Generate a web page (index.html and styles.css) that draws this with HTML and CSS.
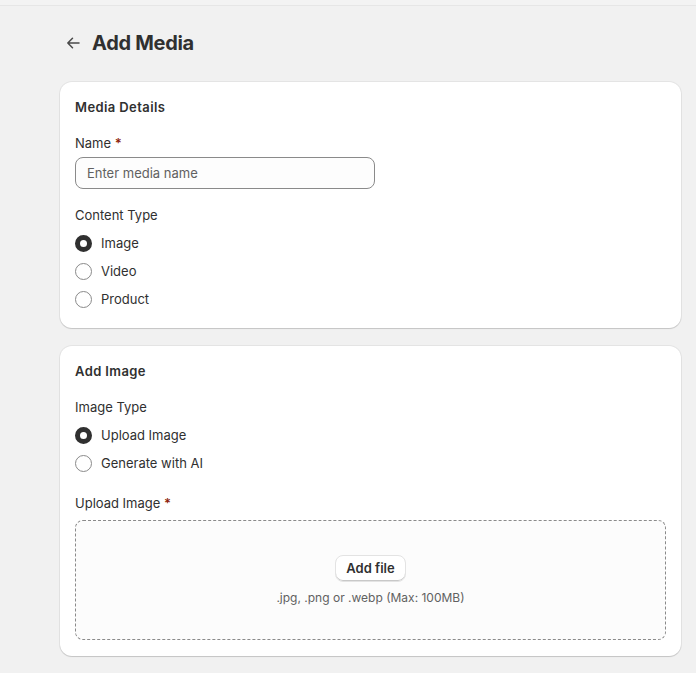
FILE: index.html
```html
<!DOCTYPE html>
<html>
<head>
<meta charset="utf-8">
<link rel="stylesheet" href="styles.css">
</head>
<body>
<div class="topbar"></div>
<main class="page">
  <header class="page-header">
    <span class="back">
      <svg width="20" height="20" viewBox="0 0 20 20"><path d="M16 10H4.8M9.5 5.3 4.8 10l4.7 4.7" fill="none" stroke="#4a4a4a" stroke-width="1.5" stroke-linecap="round" stroke-linejoin="round"/></svg>
    </span>
    <h1 class="title">Add Media</h1>
  </header>

  <section class="card first-card">
    <h2 class="card-title">Media Details</h2>
    <label class="label first">Name <span class="req">*</span></label>
    <div class="input">Enter media name</div>
    <div class="label section">Content Type</div>
    <div class="radios">
      <div class="radio-row"><span class="radio checked"></span>Image</div>
      <div class="radio-row"><span class="radio"></span>Video</div>
      <div class="radio-row"><span class="radio"></span>Product</div>
    </div>
  </section>

  <section class="card">
    <h2 class="card-title">Add Image</h2>
    <div class="label section">Image Type</div>
    <div class="radios">
      <div class="radio-row"><span class="radio checked"></span>Upload Image</div>
      <div class="radio-row"><span class="radio"></span>Generate with AI</div>
    </div>
    <div class="label section">Upload Image <span class="req">*</span></div>
    <div class="dropzone">
      <button class="btn">Add file</button>
      <div class="hint">.jpg, .png or .webp (Max: 100MB)</div>
    </div>
  </section>
</main>
</body>
</html>
```
FILE: styles.css
```css
* { box-sizing: border-box; }
html, body { margin: 0; padding: 0; }
body {
  background: #f1f1f1;
  font-family: Inter, "Noto Sans", sans-serif;
  font-size: 13px;
  line-height: 20px;
  color: #303030;
  width: 696px;
  height: 673px;
  overflow: hidden;
}
.topbar {
  height: 6px;
  border-bottom: 1px solid #e6e6e6;
  background: #f3f3f3;
}
.page {
  margin-left: 60px;
  width: 621px;
  padding-top: 25px;
  display: flex;
  flex-direction: column;
  gap: 18px;
}
.page-header {
  display: flex;
  align-items: center;
  height: 24px;
  margin-bottom: 9px;
}
.back {
  display: flex;
  width: 20px;
  height: 20px;
  margin-left: 3px;
  margin-right: 9px;
}
.title {
  margin: 0;
  font-size: 20px;
  line-height: 24px;
  font-weight: 700;
  letter-spacing: -0.3px;
  color: #303030;
}
.card {
  background: #fff;
  border-radius: 12px;
  padding: 15px 15px 16px;
  box-shadow: 0 0 0 1px rgba(0,0,0,0.05), 0 1px 1px rgba(0,0,0,0.14);
  display: flex;
  flex-direction: column;
}
.card.first-card { padding-bottom: 15px; }
.card-title {
  margin: 0;
  font-size: 13px;
  line-height: 20px;
  font-weight: 600;
  letter-spacing: 0.4px;
}
.label { display: block; }
.label.first { margin-top: 16px; }
.label.section { margin-top: 16px; }
.req { color: #8e1f0b; font-weight: 600; }
.input {
  margin-top: 4px;
  width: 300px;
  height: 32px;
  border: 1px solid #8a8a8a;
  border-radius: 8px;
  padding: 0 11px;
  display: flex;
  align-items: center;
  color: #616161;
  background: #fdfdfd;
}
.radios {
  margin-top: 4px;
  display: flex;
  flex-direction: column;
}
.radio-row {
  height: 28px;
  display: flex;
  align-items: center;
  gap: 9px;
}
.radio {
  width: 17px;
  height: 17px;
  border-radius: 50%;
  border: 1px solid #8a8a8a;
  background: #fff;
  flex: none;
}
.radio.checked {
  border: 5.5px solid #303030;
}
.dropzone {
  margin-top: 7px;
  height: 120px;
  border: 1px dashed #8a8a8a;
  border-radius: 8px;
  background: #fcfcfc;
  display: flex;
  flex-direction: column;
  align-items: center;
  justify-content: center;
  gap: 8px;
}
.btn {
  font-family: inherit;
  font-size: 13px;
  font-weight: 600;
  color: #303030;
  background: #fff;
  border: 1px solid #e3e3e3;
  border-radius: 8px;
  height: 27px;
  padding: 0 10px;
  box-shadow: inset 0 -1px 0 #c8c8c8;
}
.hint {
  color: #616161;
  font-size: 12px;
  line-height: 16px;
}
```
